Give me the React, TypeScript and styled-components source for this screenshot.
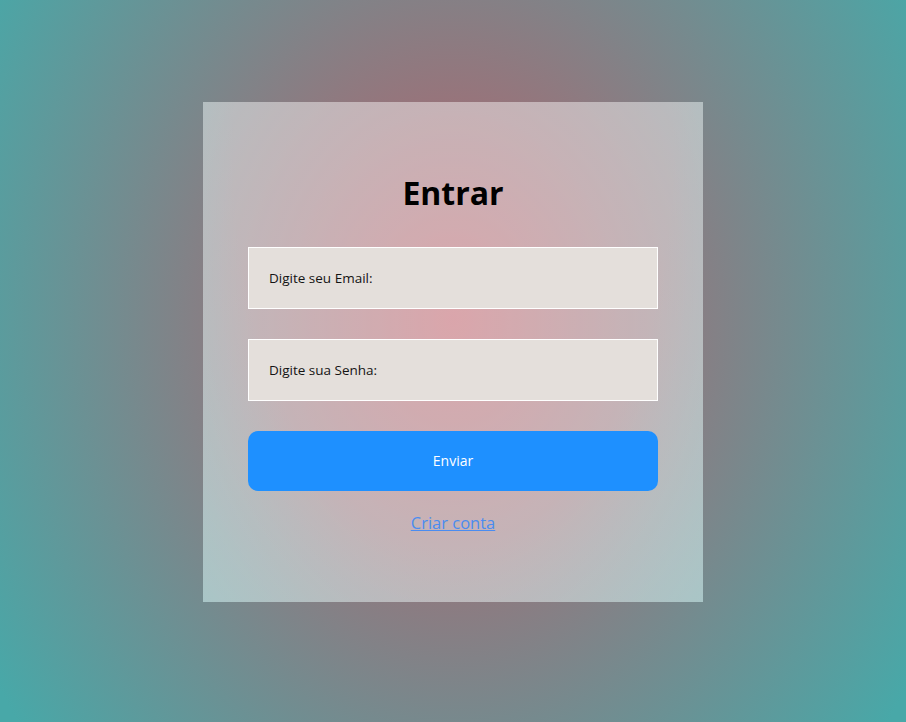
import styled, { createGlobalStyle } from 'styled-components';

const GlobalStyle = createGlobalStyle`
    * {
        box-sizing: border-box;
    }
    body {
        margin: 0;
        font-family: 'Open Sans', 'Liberation Sans', sans-serif;
    }
`;

const Page = styled.main`
    min-height: 100vh;
    display: flex;
    justify-content: center;
    align-items: flex-start;
    padding-top: 102px;
    background: radial-gradient(ellipse 540px 680px at 50% 320px, #bc5c66 0%, #48a8a8 100%);
`;

const Card = styled.form`
    width: 500px;
    height: 500px;
    padding: 67px 45px 0;
    display: flex;
    flex-direction: column;
    align-items: stretch;
    background:
        linear-gradient(rgba(255, 255, 255, 0.45), rgba(255, 255, 255, 0.45)),
        radial-gradient(ellipse at 50% 10%, rgba(72, 168, 168, 0) 62%, rgba(72, 168, 168, 0.4) 100%);
`;

const Title = styled.h1`
    margin: 0 0 30px;
    font-size: 32px;
    line-height: 48px;
    font-weight: 700;
    text-align: center;
    color: #000;
`;

const Field = styled.input`
    height: 62px;
    margin: 0 0 30px;
    padding: 0 20px;
    border: 1px solid #fff;
    background: #e4dfdb;
    font-family: inherit;
    font-size: 13.5px;
    color: #111;
    outline: none;

    &::placeholder {
        color: #141414;
    }
`;

const SubmitButton = styled.button`
    height: 60px;
    margin: 0 0 20px;
    padding: 0 0 2px;
    border: none;
    border-radius: 10px;
    background: #1e90ff;
    color: #fff;
    font-family: inherit;
    font-size: 14px;
    font-weight: 500;
    cursor: pointer;
`;

const SignupLink = styled.a`
    align-self: center;
    font-size: 16.5px;
    line-height: 24px;
    color: #4a8cf0;
    text-decoration: underline;
`;

export default function App() {
    return (
        <>
            <GlobalStyle />
            <Page>
                <Card onSubmit={(e) => e.preventDefault()}>
                    <Title>Entrar</Title>
                    <Field type="email" placeholder="Digite seu Email:" />
                    <Field type="password" placeholder="Digite sua Senha:" />
                    <SubmitButton type="submit">Enviar</SubmitButton>
                    <SignupLink href="#">Criar conta</SignupLink>
                </Card>
            </Page>
        </>
    );
}
